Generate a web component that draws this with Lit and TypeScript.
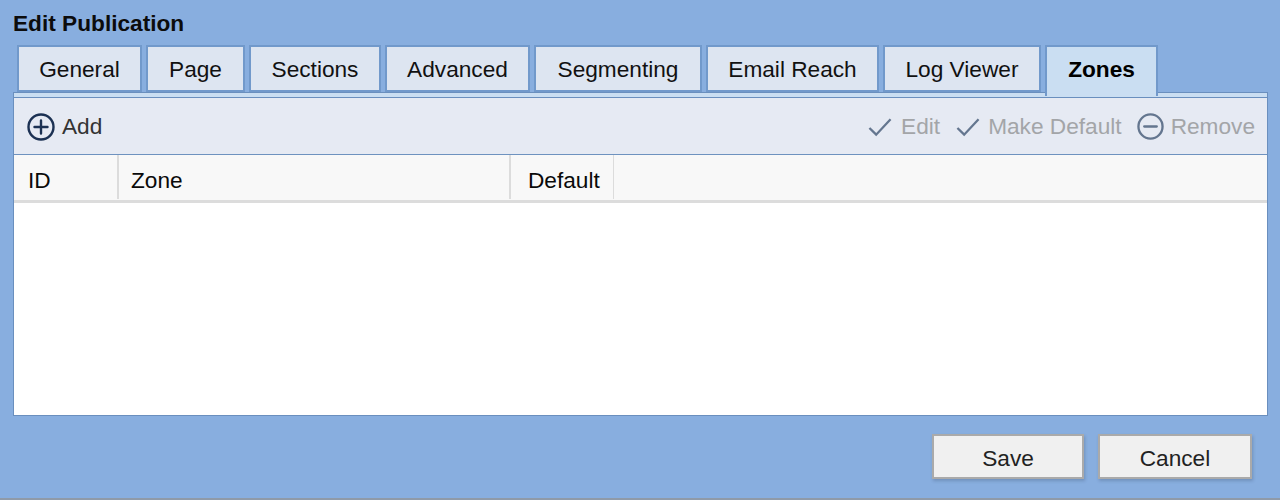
import { LitElement, html, css } from "lit";
import { customElement } from "lit/decorators.js";

const tabs: [string, number][] = [
  ["General", 125], ["Page", 99], ["Sections", 132], ["Advanced", 145],
  ["Segmenting", 168], ["Email Reach", 173], ["Log Viewer", 158], ["Zones", 113],
];

@customElement("app-root")
export class AppRoot extends LitElement {
  static styles = css`
    :host { display: block; width: 1280px; height: 500px; overflow: hidden; font-family: "Liberation Sans", Arial, sans-serif; color: #000; }
    .page { box-sizing: border-box; height: 500px; background: #88aedf; border-bottom: 2px solid #8f9aa8; padding: 10px 12px 0 13px; display: flex; flex-direction: column; }
    .title { font-weight: 700; font-size: 22.67px; line-height: 26px; height: 35px; color: #0c0c0c; }
    .tabs { display: flex; gap: 4px; padding-left: 4px; height: 47px; position: relative; z-index: 1; }
    .tab { box-sizing: border-box; height: 47px; background: #dde5f1; border: 2px solid #7199cb; padding-top: 1px; display: flex; align-items: center; justify-content: center; font-size: 22.67px; color: #111; }
    .tab.active { background: #cadef2; font-weight: 700; height: 51px; border-bottom: none; color: #000; padding: 0 0 5px; }
    .panel { box-sizing: border-box; width: 1255px; height: 324px; border: 1.5px solid #6a8fbe; background: #fff; display: flex; flex-direction: column; }
    .strip { height: 4px; background: #cadef2; border-bottom: 1px solid #6a8fbe; flex: none; }
    .toolbar { box-sizing: border-box; height: 57px; flex: none; background: #e6eaf3; border-bottom: 1px solid #6e92bf; display: flex; align-items: center; padding: 1px 12px 0 13px; font-size: 22.67px; color: #333; }
    .tool { display: flex; align-items: center; gap: 8px; }
    .tool.tight { gap: 7px; }
    .tool.edit { gap: 9px; margin-right: 1px; }
    .spacer { flex: 1; }
    .right { display: flex; gap: 15px; color: #a3a5a8; }
    svg { display: block; flex: none; }
    .thead { box-sizing: border-box; height: 48px; flex: none; display: flex; background: #f8f8f8; border-bottom: 3px solid #dcdcdc; font-size: 22.67px; color: #0a0a0a; }
    .th { box-sizing: border-box; display: flex; align-items: center; margin-bottom: 1px; padding: 7px 0 0 14px; border-right: 2px solid #dcdcdc; }
    .th.id { width: 105px; }
    .th.zone { width: 392px; padding-left: 12px; }
    .th.def { width: 103px; padding-left: 17px; border-right-width: 1px; }
    .footer { display: flex; justify-content: flex-end; gap: 14px; padding-top: 18px; padding-right: 16px; }
    .btn { box-sizing: border-box; height: 45px; padding-top: 4px; background: #f0f0f0; border: 2px solid #aaaaaa; box-shadow: 1px 2px 3px rgba(60, 80, 110, .3); display: flex; align-items: center; justify-content: center; font-size: 22.67px; color: #222; }
    .save { width: 152px; }
    .cancel { width: 154px; }
  `;

  render() {
    return html`<div class="page">
      <div class="title">Edit Publication</div>
      <div class="tabs">
        ${tabs.map(([t, w], i) => html`<div class="tab ${i === 7 ? "active" : ""}" style="width:${w}px">${t}</div>`)}
      </div>
      <div class="panel">
        <div class="strip"></div>
        <div class="toolbar">
          <div class="tool tight">
            <svg width="28" height="28" viewBox="0 0 28 28" fill="none" stroke="#1c3153" stroke-width="2.4"><circle cx="14" cy="14" r="12.5"/><path d="M14 7.5v13M7.5 14h13" stroke-linecap="round"/></svg>
            <span>Add</span>
          </div>
          <div class="spacer"></div>
          <div class="right">
            <div class="tool edit"><svg width="24" height="20" viewBox="0 0 25 20" fill="none" stroke="#64768f" stroke-width="2.4"><path d="M1.5 11l7 7L23.5 2"/></svg><span>Edit</span></div>
            <div class="tool"><svg width="24" height="20" viewBox="0 0 25 20" fill="none" stroke="#64768f" stroke-width="2.4"><path d="M1.5 11l7 7L23.5 2"/></svg><span>Make Default</span></div>
            <div class="tool tight"><svg width="27" height="27" viewBox="0 0 28 28" fill="none" stroke="#64768f" stroke-width="2.4"><circle cx="14" cy="14" r="12.5"/><path d="M7.5 14h13" stroke-linecap="round"/></svg><span>Remove</span></div>
          </div>
        </div>
        <div class="thead">
          <div class="th id">ID</div>
          <div class="th zone">Zone</div>
          <div class="th def">Default</div>
        </div>
      </div>
      <div class="footer">
        <div class="btn save">Save</div>
        <div class="btn cancel">Cancel</div>
      </div>
    </div>`;
  }
}
